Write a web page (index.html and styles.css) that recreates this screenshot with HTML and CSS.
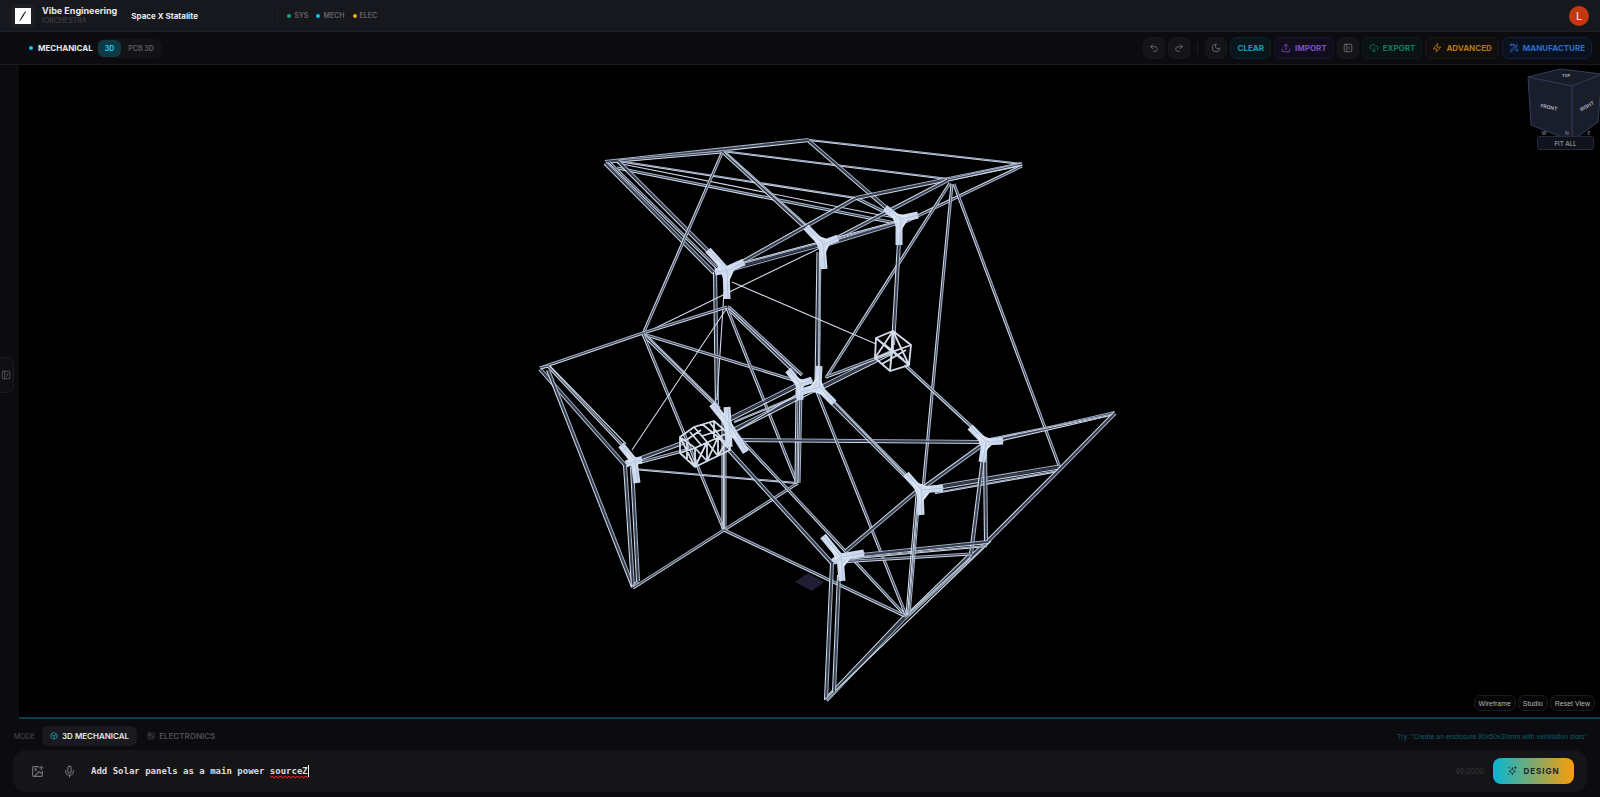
FILE: index.html
```html
<!DOCTYPE html>
<html lang="en">
<head>
  <meta charset="UTF-8" />
  <meta name="viewport" content="width=device-width, initial-scale=1.0"/>
  <title>Vibe Engineering</title>
  <link rel="stylesheet" href="styles.css">
</head>
<body>
  <header class="topbar">
    <div class="logo">
      <svg viewBox="0 0 16 16"><rect width="16" height="16" fill="#fff"/><path d="M10.500 3.500 7.500 9 5 12.500 8 7Z" fill="#111" stroke="#111" stroke-width=".7"/></svg>
    </div>
    <div class="brand">
      <h1>Vibe Engineering</h1>
      <span>IORCHESTRA</span>
    </div>
    <h2 class="project">Space X Statalite</h2>
    <ul class="status">
      <li class="sys">SYS</li>
      <li class="mech">MECH</li>
      <li class="elec">ELEC</li>
    </ul>
    <button class="avatar">L</button>
  </header>

  <nav class="toolbar">
    <h3 class="section">MECHANICAL</h3>
    <div class="tabs">
      <button class="active">3D</button>
      <button>PCB 3D</button>
    </div>
    <div class="tools">
      <button class="tool square" aria-label="Undo"><svg class="icon" viewBox="0 0 24 24"><path d="M9 14 4 9l5-5"/><path d="M4 9h10.500a5.500 5.500 0 0 1 0 11H11"/></svg></button>
      <button class="tool square" aria-label="Redo"><svg class="icon" viewBox="0 0 24 24"><path d="m15 14 5-5-5-5"/><path d="M20 9H9.500a5.500 5.500 0 0 0 0 11H13"/></svg></button>
      <span class="divider"></span>
      <button class="tool square" aria-label="Dark mode"><svg class="icon" viewBox="0 0 24 24"><path d="M12 3a6 6 0 0 0 9 9 9 9 0 1 1-9-9Z"/></svg></button>
      <button class="tool clear">CLEAR</button>
      <button class="tool import"><svg class="icon" viewBox="0 0 24 24"><path d="M12 16V3M7 8l5-5 5 5M3 15v4a2 2 0 0 0 2 2h14a2 2 0 0 0 2-2v-4"/></svg>IMPORT</button>
      <button class="tool square" aria-label="Toggle panel"><svg class="icon" viewBox="0 0 24 24"><rect x="3" y="3" width="18" height="18" rx="2"/><path d="M9 3v18M16 9l-3 3 3 3"/></svg></button>
      <button class="tool export"><svg class="icon" viewBox="0 0 24 24"><path d="M12 12v9M8 17l4 4 4-4"/><path d="M4 15a7 7 0 1 1 11.700-7.500h1.800A4.500 4.500 0 0 1 20 16"/></svg>EXPORT</button>
      <button class="tool advanced"><svg class="icon" viewBox="0 0 24 24"><path d="M13 2 3 14h8l-1 8 11-12h-8Z"/></svg>ADVANCED</button>
      <button class="tool manufacture"><svg class="icon" viewBox="0 0 24 24"><path d="m3 18 15-15 3 3L6 21ZM14 7l3 3M5 2v5M2.500 4.500h5M19 14v6M16 17h6M11 2v3M9 4h3"/></svg>MANUFACTURE</button>
    </div>
  </nav>

  <main class="workspace">
    <aside class="rail">
      <button class="rail-tab" aria-label="Open panel"><svg class="icon" viewBox="0 0 24 24"><rect x="3" y="3" width="18" height="18" rx="2"/><path d="M9 3v18M14 9l3 3-3 3"/></svg></button>
    </aside>
    <section class="viewport">
      <svg id="model" viewBox="19 65 1581 652">
        <path d="M795 582 808 573 824 582 812 591Z" fill="#211d33"/>
        <g id="struts"></g>
        <g id="joints"></g>
        <g class="box">
          <path d="M876 338 893 331 911 345 909 365 890 371 875 358ZM876 338 892 352 911 345M890 371 892 352M875 358 893 331M876 338 909 365M893 331 909 365M911 345 875 358M893 331 890 371M884 344 904 360M882 364 906 350M893 331V352"/>
          <path d="M680 437 694 427 714 421 730 435 730 450 695 467 680 453ZM680 437 695 448 730 432M695 448 695 467M694 427 707 442 707 461M702 424 718 437 718 456M680 437 695 467M680 453 695 448M695 448 707 461M707 442 695 467M685 441 701 430M707 442 718 456M718 437 707 461M718 437 730 450M730 435 718 456M690 432 702 446M702 436 724 429M714 421V438M710 423 724 442M687 443 687 460"/>
        </g>
      </svg>

      <div class="view-cube">
        <svg viewBox="0 0 76 76">
          <path d="M36 3 4 11 48 20 78 8Z" fill="#181c29"/>
          <path d="M4 11 48 20V75L7 59Z" fill="#1a1e2c"/>
          <path d="M48 20 78 8 74 56 48 75Z" fill="#1a1e2b"/>
          <path d="M36 3 4 11 48 20 78 8ZM4 11 7 59 48 75 74 56 78 8M48 20V75" fill="none" stroke="#343d5c"/>
          <text x="25" y="43" transform="rotate(12 25 41)">FRONT</text>
          <text x="63" y="42" transform="rotate(-30 63 40)">RIGHT</text>
          <text class="top-face" x="42" y="11">TOP</text>
          <text class="compass" x="20" y="69">W</text>
          <text class="compass" x="43" y="69">N</text>
          <text class="compass" x="65" y="69">E</text>
        </svg>
        <button>FIT ALL</button>
      </div>

      <div class="view-buttons">
        <button>Wireframe</button>
        <button>Studio</button>
        <button>Reset View</button>
      </div>
    </section>
  </main>

  <footer class="composer">
    <div class="modes">
      <span class="label">MODE</span>
      <button class="mode active"><svg class="icon" viewBox="0 0 24 24"><path d="m12 2 9 5v10l-9 5-9-5V7Z"/><path d="m7 9 5 3 5-3M12 12v6"/></svg>3D MECHANICAL</button>
      <button class="mode"><svg class="icon" viewBox="0 0 24 24"><rect x="3" y="3" width="18" height="18" rx="2"/><path d="M7 7h4v4H7ZM11 9h3l3 3v5M7 17l3-3h3"/></svg>ELECTRONICS</button>
      <span class="hint">Try: "Create an enclosure 80x50x30mm with ventilation slots"</span>
    </div>
    <form class="prompt" onsubmit="return false">
      <button type="button" class="attach" aria-label="Add image"><svg class="icon" viewBox="0 0 24 24"><path d="M14 3H5a2 2 0 0 0-2 2v14a2 2 0 0 0 2 2h14a2 2 0 0 0 2-2v-8M16 5h6M19 2v6M6 21l9-9 6 5"/><circle cx="8.500" cy="8.500" r="1.500"/></svg></button>
      <button type="button" class="attach" aria-label="Dictate"><svg class="icon" viewBox="0 0 24 24"><rect x="9" y="2" width="6" height="13" rx="3"/><path d="M5 10v2a7 7 0 0 0 14 0v-2M12 19v3"/></svg></button>
      <div class="field">
        <input type="text" aria-label="Prompt" maxlength="2000" spellcheck="false" value="Add Solar panels as a main power sourceZ">
        <svg class="squiggle" viewBox="0 0 36 3" preserveAspectRatio="none"><path d="M0 2 2 0 4 2 6 0 8 2 10 0 12 2 14 0 16 2 18 0 20 2 22 0 24 2 26 0 28 2 30 0 32 2 34 0 36 2"/></svg>
        <span class="caret"></span>
      </div>
      <span class="count">40/2000</span>
      <button class="design"><svg class="icon" viewBox="0 0 24 24"><path d="M13 5c1 5 2 6 7 8-5 1-6 3-7 8-2-5-3-7-8-8 5-2 6-3 8-8ZM20 2v4M18 4h4M4 4h1M4 19v1"/></svg>DESIGN</button>
    </form>
  </footer>

  <script>
    // x1, y1, x2, y2, tube width (0 draws a single edge)
    const struts = [
      // top panel
      [605, 162, 809, 140, 3], [618, 161, 722, 152, 2], [809, 140, 1022, 164, 1], [722, 151, 948, 179, 1],
      [618, 161, 856, 198, 1], [617, 163, 900, 219, 0], [617, 168, 900, 224, 2],
      [605, 163, 714, 273, 3], [609, 162, 718, 269, 2], [618, 161, 708, 251, 3],
      [722, 151, 820, 241, 3], [724, 151, 824, 241, 1], [809, 141, 898, 218, 3],
      [856, 198, 735, 266, 3], [856, 198, 897, 218, 2], [856, 198, 1022, 164, 3],
      [948, 180, 835, 239, 3], [1022, 166, 905, 222, 2], [948, 180, 1022, 164, 2],
      [900, 222, 822, 246, 3], [822, 244, 727, 270, 4], [900, 221, 735, 265, 1],
      // uprights and braces under the top panel
      [722, 153, 643, 334, 2], [950, 183, 826, 378, 2], [952, 184, 923, 490, 2], [954, 184, 1060, 468, 2],
      [715, 272, 717, 408, 3], [724, 292, 717, 400, 0], [819, 252, 817, 384, 4], [820, 252, 819, 384, 1],
      [900, 225, 893, 345, 3], [732, 282, 876, 344, 0], [822, 247, 643, 334, 0],
      // left wing
      [540, 368, 643, 333, 2], [643, 333, 727, 307, 2], [643, 334, 800, 382, 2],
      [727, 307, 797, 374, 3], [729, 307, 802, 375, 2], [643, 334, 717, 406, 3], [645, 334, 720, 408, 1],
      [643, 334, 724, 530, 2], [727, 308, 797, 483, 2], [727, 308, 632, 450, 0],
      [548, 366, 623, 446, 2], [550, 366, 626, 444, 0], [540, 369, 625, 465, 3],
      [548, 370, 633, 587, 3], [540, 368, 548, 366, 2],
      [625, 465, 633, 587, 3], [632, 467, 638, 581, 3], [638, 581, 633, 587, 2],
      [633, 588, 724, 530, 2], [724, 530, 798, 483, 2], [633, 469, 797, 483, 1],
      [797, 390, 796, 483, 2], [801, 390, 799, 483, 2],
      [724, 420, 724, 529, 4], [724, 440, 724, 529, 1],
      // spine
      [628, 463, 685, 442, 3], [630, 465, 690, 449, 2], [730, 419, 800, 384, 4], [734, 430, 817, 388, 4],
      [734, 422, 812, 390, 1], [820, 388, 892, 352, 4], [826, 377, 890, 353, 2], [730, 435, 796, 395, 0],
      // right wing
      [740, 440, 985, 442, 3], [737, 435, 905, 615, 2], [728, 449, 832, 563, 3], [724, 530, 905, 616, 2],
      [820, 390, 916, 486, 4], [823, 390, 912, 482, 1], [817, 392, 906, 615, 2],
      [905, 365, 972, 427, 2], [985, 443, 1115, 413, 3], [990, 439, 1115, 414, 1],
      [922, 490, 1059, 467, 4], [935, 493, 1059, 471, 1],
      [1115, 413, 1060, 469, 3], [1060, 469, 987, 542, 3], [987, 542, 905, 618, 3], [905, 617, 826, 700, 4],
      [991, 541, 832, 694, 0], [971, 554, 908, 615, 3], [971, 558, 905, 617, 1],
      [984, 450, 971, 554, 3], [985, 450, 986, 541, 3],
      [985, 443, 920, 490, 3], [917, 491, 846, 551, 3],
      [842, 557, 988, 542, 3], [838, 562, 971, 554, 2], [845, 559, 987, 546, 1],
      [918, 495, 908, 615, 4], [918, 500, 908, 615, 1],
      [832, 563, 826, 700, 3], [839, 575, 834, 692, 3], [834, 692, 826, 700, 2]
    ];

    // centre of each bracket, then the end of each of its arms
    const joints = [
      [726, 270, [708, 250], [727, 299], [744, 262], [715, 272]],
      [822, 244, [806, 227], [824, 269], [838, 238]],
      [899, 219, [885, 208], [899, 245], [918, 215]],
      [799, 384, [788, 370], [800, 400], [812, 380]],
      [818, 387, [819, 366], [834, 403], [800, 392]],
      [728, 424, [712, 404], [727, 407], [746, 452], [729, 447]],
      [634, 461, [621, 445], [637, 483], [642, 460], [626, 464]],
      [920, 490, [906, 474], [921, 515], [943, 488]],
      [985, 442, [970, 427], [982, 462], [1003, 441]],
      [840, 557, [823, 536], [842, 581], [864, 553], [833, 562]]
    ];

    const NS = 'http://www.w3.org/2000/svg';

    function addPath(parent, d, className) {
      const path = document.createElementNS(NS, 'path');
      path.setAttribute('d', d);
      path.setAttribute('class', className);
      document.getElementById(parent).appendChild(path);
    }

    struts.forEach(([x1, y1, x2, y2, width]) => {
      const length = Math.hypot(x2 - x1, y2 - y1);
      const nx = -(y2 - y1) / length * width / 2;
      const ny = (x2 - x1) / length * width / 2;
      if (width) addPath('struts', `M${x1} ${y1}L${x2} ${y2}`, 'core');
      addPath('struts', `M${x1 + nx} ${y1 + ny}L${x2 + nx} ${y2 + ny}`, 'edge');
      if (width) addPath('struts', `M${x1 - nx} ${y1 - ny}L${x2 - nx} ${y2 - ny}`, 'edge shade');
    });

    joints.forEach(([cx, cy, ...arms]) => {
      arms.forEach(([x, y], i) => {
        const [nextX, nextY] = arms[(i + 1) % arms.length];
        addPath('joints', `M${cx} ${cy}L${x} ${y}`, 'arm');
        addPath('joints', `M${cx} ${cy}L${(cx + x) / 2} ${(cy + y) / 2}L${(cx + nextX) / 2} ${(cy + nextY) / 2}Z`, 'gusset');
      });
      arms.forEach(([x, y]) => addPath('joints', `M${cx + 1} ${cy}L${x + 1} ${y}`, 'groove'));
    });
  </script>
</body>
</html>
```
FILE: styles.css
```css
* {
  box-sizing: border-box;
}

body {
  margin: 0;
  height: 100vh;
  display: flex;
  flex-direction: column;
  background: #0b0b10;
  color: #e8e8ea;
  font-family: Inter, "Liberation Sans", sans-serif;
  font-size: 8px;
  overflow: hidden;
}

h1, h2, h3, ul {
  margin: 0;
  padding: 0;
}

button {
  display: flex;
  align-items: center;
  justify-content: center;
  padding: 0;
  border: 0;
  background: none;
  color: inherit;
  font: inherit;
  cursor: pointer;
}

.icon {
  width: 10px;
  height: 10px;
  fill: none;
  stroke: currentColor;
  stroke-width: 2;
  stroke-linecap: round;
  stroke-linejoin: round;
}

/* top bar */
.topbar {
  display: flex;
  align-items: center;
  flex: none;
  height: 32px;
  padding: 0 11px;
  background: #17181d;
  border-bottom: 1px solid #1f2025;
}

.logo {
  padding: 4px;
  border-radius: 6px;
  background: #1e1f24;
}

.logo svg {
  display: block;
  width: 16px;
  height: 16px;
}

.brand {
  margin-left: 7px;
}

.brand h1 {
  font-size: 9px;
  line-height: 10px;
  font-weight: 700;
}

.brand span {
  display: block;
  font-size: 7px;
  line-height: 9px;
  color: #44454b;
}

.project {
  width: 146px;
  margin-left: 14px;
  font-size: 8px;
  font-weight: 700;
}

.status {
  display: flex;
  align-items: center;
  gap: 8px;
  height: 12px;
  padding-left: 9px;
  border-left: 1px solid #1f2025;
  list-style: none;
  font-size: 7px;
  font-weight: 600;
  color: #626369;
}

.status li {
  display: flex;
  align-items: center;
  gap: 3px;
}

.status li::before,
.section::before {
  content: "";
  width: 4px;
  height: 4px;
  border-radius: 50%;
  background: #12a676;
}

.status .mech::before,
.section::before {
  background: #10c8ea;
}

.status .elec::before {
  background: #f9ab10;
}

.avatar {
  width: 20px;
  height: 20px;
  margin-left: auto;
  border-radius: 50%;
  background: #c4380f;
  color: #f3ded7;
  font-size: 11px;
  font-weight: 500;
}

/* toolbar */
.toolbar {
  display: flex;
  align-items: center;
  flex: none;
  height: 33px;
  padding: 0 8px 0 29px;
  border-bottom: 1px solid #1a1a1f;
}

.section {
  display: flex;
  align-items: center;
  gap: 5px;
  font-size: 8px;
  font-weight: 700;
}

.tabs {
  display: flex;
  margin-left: 4px;
  padding: 1px;
  border-radius: 7px;
  background: #131317;
  font-size: 7px;
  font-weight: 700;
  color: #56575d;
}

.tabs button {
  height: 17px;
  padding: 0 7px;
  border-radius: 6px;
}

.tabs .active {
  background: #0d3a45;
  color: #1cc9e5;
}

.tools {
  display: flex;
  align-items: center;
  gap: 3px;
  margin-left: auto;
}

.tool {
  height: 22px;
  gap: 4px;
  padding: 0 6px;
  border: 1px solid #18181d;
  border-radius: 7px;
  font-size: 8px;
  font-weight: 700;
}

.square {
  width: 22px;
  padding: 0;
  background: #151519;
  color: #707177;
}

.divider {
  width: 1px;
  height: 12px;
  margin: 0 4px;
  background: #1c1c21;
}

.clear {
  background: #09161c;
  border-color: #0b2329;
  color: #0ea0b5;
}

.import {
  background: #110d1d;
  border-color: #1b1430;
  color: #7950c4;
}

.export {
  background: #0a1214;
  border-color: #0a1d1b;
  color: #0a8058;
}

.advanced {
  background: #110e10;
  border-color: #211810;
  color: #b5770c;
}

.manufacture {
  background: #0a111f;
  border-color: #10213d;
  color: #2c6fc6;
}

/* workspace */
.workspace {
  display: flex;
  flex: 1;
  min-height: 0;
}

.rail {
  display: flex;
  align-items: center;
  flex: none;
  width: 19px;
}

.rail-tab {
  width: 14px;
  height: 36px;
  margin-bottom: 34px;
  padding-right: 2px;
  border: 1px solid #1a1a1f;
  border-left: 0;
  border-radius: 0 7px 7px 0;
  background: #101014;
  color: #5a5b61;
}

.viewport {
  position: relative;
  flex: 1;
  min-width: 0;
  background: #000;
  border-bottom: 2px solid #0a3c4a;
}

#model {
  display: block;
  width: 100%;
  height: 100%;
}

.core {
  stroke: #353e50;
  stroke-width: 2;
}

.edge {
  fill: none;
  stroke: #cfd8e6;
  stroke-width: 1.1;
}

.shade {
  stroke: #a3b0c6;
}

.arm {
  stroke: #ccd9ee;
  stroke-width: 7;
}

.gusset {
  fill: #c9d6ea;
  stroke: #dce6f5;
  stroke-width: 2;
}

.groove {
  stroke: #b4c2da;
  stroke-width: 1;
}

.box path {
  fill: none;
  stroke: #d3ddeb;
  stroke-width: 1.8;
}

.view-cube {
  position: absolute;
  top: 1px;
  right: 0;
  width: 76px;
}

.view-cube svg {
  display: block;
  width: 76px;
  height: 76px;
}

.view-cube text {
  fill: #a4a9b8;
  font-size: 5px;
  font-weight: 700;
  text-anchor: middle;
}

.view-cube .top-face {
  font-size: 4px;
}

.view-cube .compass {
  fill: #626779;
}

.view-cube button {
  width: 57px;
  height: 14px;
  margin: -6px 0 0 13px;
  position: relative;
  border: 1px solid #242a3b;
  border-radius: 3px;
  background: #10131c;
  color: #878b98;
  font-size: 6px;
  font-weight: 600;
}

.view-buttons {
  position: absolute;
  right: 5px;
  bottom: 6px;
  display: flex;
  gap: 2px;
}

.view-buttons button {
  height: 16px;
  padding: 0 4px;
  border: 1px solid #1b1b1e;
  border-radius: 6px;
  background: #060607;
  color: #b4b4b8;
  font-family: "Liberation Sans", sans-serif;
  font-size: 7px;
}

/* prompt area */
.composer {
  flex: none;
  padding: 7px 13px 5px;
}

.modes {
  display: flex;
  align-items: center;
  height: 20px;
  margin-bottom: 4px;
  color: #4d4e54;
}

.label {
  width: 29px;
  padding-left: 1px;
  font-size: 7px;
}

.mode {
  height: 20px;
  gap: 4px;
  padding: 0 8px;
  border-radius: 6px;
  font-size: 8px;
  font-weight: 600;
}

.mode .icon {
  width: 8px;
  height: 8px;
}

.mode.active {
  margin-right: 2px;
  background: #1a1a1e;
  color: #e4e4e6;
}

.mode.active .icon {
  color: #11bfda;
}

.hint {
  margin-left: auto;
  font-family: "Liberation Sans", sans-serif;
  font-size: 7px;
  color: #0f5b6c;
}

.prompt {
  display: flex;
  align-items: center;
  height: 42px;
  padding: 0 13px 0 18px;
  border-radius: 13px;
  background: #151518;
}

.attach {
  width: 13px;
  height: 24px;
  margin-right: 19px;
  color: #75767b;
}

.attach .icon {
  width: 13px;
  height: 13px;
  flex: none;
}

.field {
  position: relative;
  flex: 1;
  margin-left: -4px;
  font: bold 9px "DejaVu Sans Mono", "Liberation Mono", monospace;
}

.field input {
  display: block;
  width: 100%;
  height: 16px;
  padding: 0;
  border: 0;
  outline: 0;
  background: none;
  color: #dcdcde;
  font: inherit;
}

.squiggle {
  position: absolute;
  left: 33ch;
  bottom: 0;
  width: 7ch;
  height: 3px;
  fill: none;
  stroke: #d91f26;
}

.caret {
  position: absolute;
  left: 40ch;
  top: 2px;
  width: 1px;
  height: 12px;
  background: #fff;
}

.count {
  margin-right: 9px;
  font-size: 7px;
  color: #37383d;
}

.design {
  width: 81px;
  height: 26px;
  gap: 6px;
  border-radius: 8px;
  background: linear-gradient(90deg, #06b6d4, #f99d07);
  color: #15232a;
  font-size: 8px;
  font-weight: 700;
  letter-spacing: 1px;
}
```
